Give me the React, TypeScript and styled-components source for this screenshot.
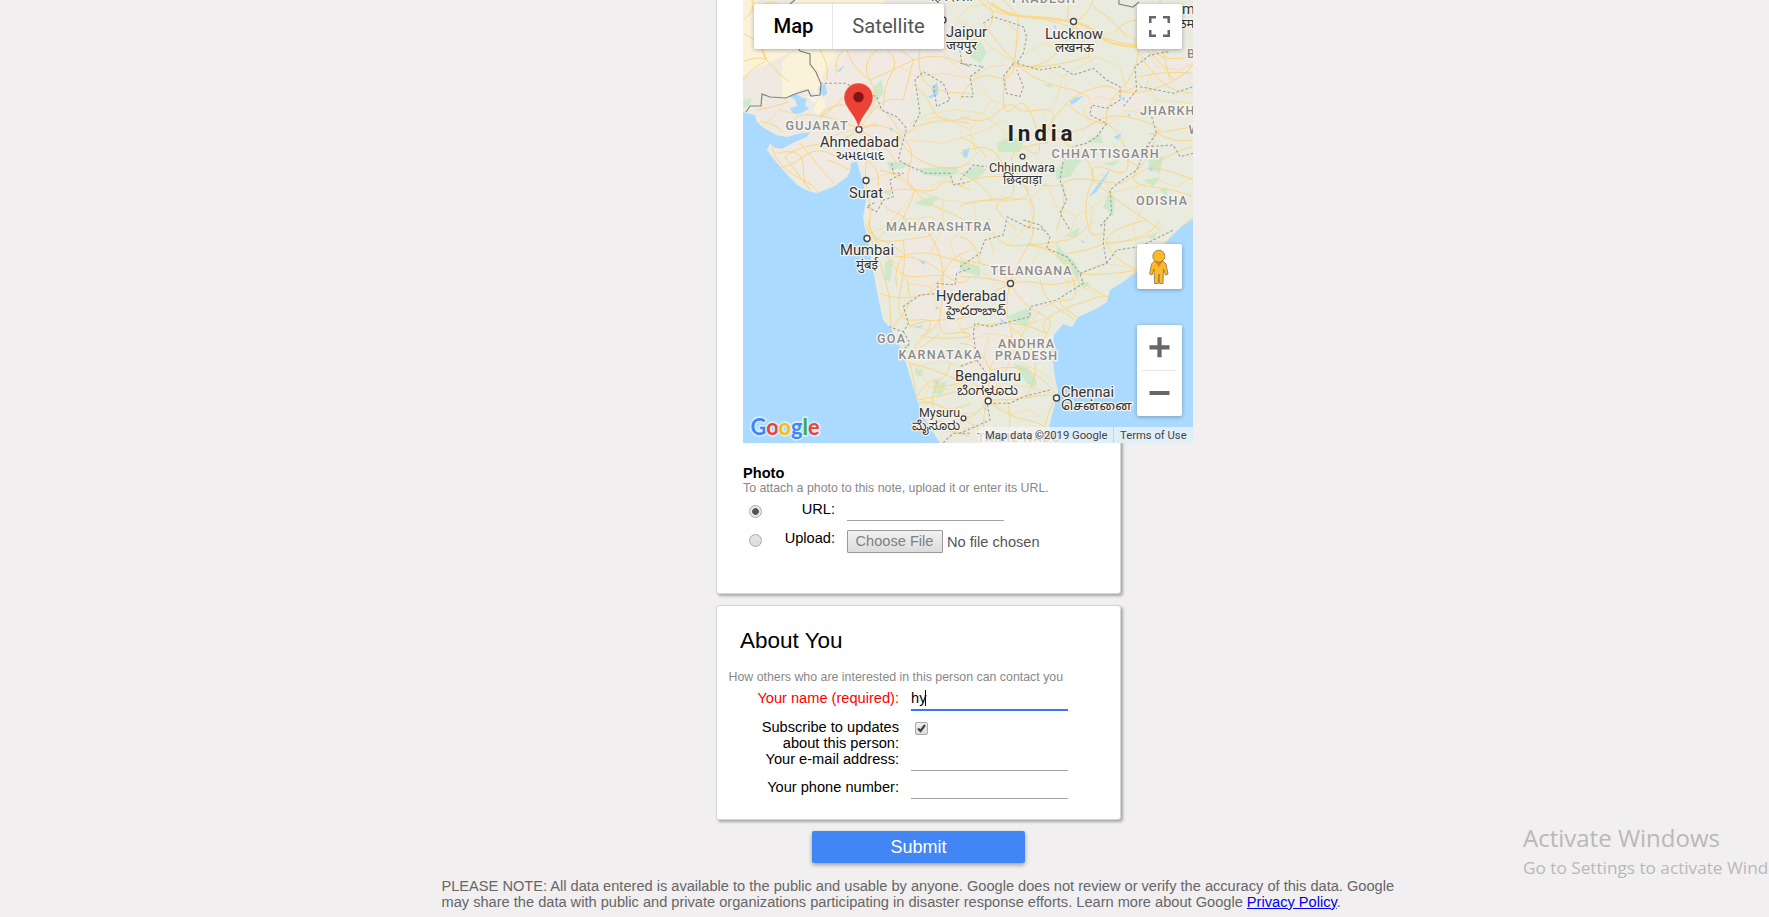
import React from "react";
import styled, { createGlobalStyle } from "styled-components";

const GlobalStyle = createGlobalStyle`
  * { box-sizing: border-box; }
  html, body { margin: 0; padding: 0; background: #f1eff0; overflow: hidden; }
  body { font: 14.625px/16px "Liberation Sans", Arial, sans-serif; color: #000; }
`;

const Page = styled.main`
  position: relative;
  width: 1769px;
  height: 917px;
  overflow: hidden;
`;

const Form = styled.form`
  width: 405px;
  margin-left: 716px;
  display: flex;
  flex-direction: column;
`;

const Card = styled.section<{ $height: number; $clipped?: boolean }>`
  width: 405px;
  height: ${(p) => p.$height}px;
  display: flex;
  flex-direction: column;
  background: #fff;
  border: 1px solid #d6d5d6;
  border-top-width: ${(p) => (p.$clipped ? 0 : 1)}px;
  border-radius: ${(p) => (p.$clipped ? "0 0 3px 3px" : "3px")};
  box-shadow: 2px 2px 3px rgba(0, 0, 0, 0.3);
  & + & { margin-top: 11px; }
`;

/* ---------- map ---------- */

const MapFrame = styled.div`
  position: relative;
  z-index: 1;
  flex: none;
  width: 450px;
  height: 443px;
  margin-left: 26px;
  background: #aadaff;
  font-family: Roboto, sans-serif;
`;

const MapCanvas = styled.svg`
  display: block;
  width: 450px;
  height: 443px;
`;

const Control = styled.div`
  position: absolute;
  background: #fff;
  border-radius: 2px;
  box-shadow: 0 1px 4px rgba(0, 0, 0, 0.3);
  display: flex;
  align-items: center;
  justify-content: center;
`;

const TypeSwitch = styled(Control)`
  left: 11px;
  top: 4px;
  width: 190px;
  height: 45px;
`;

const TypeButton = styled.button<{ $active?: boolean }>`
  width: ${(p) => (p.$active ? 78 : 112)}px;
  height: 45px;
  padding: ${(p) => (p.$active ? "0 0 2px 1px" : "0 0 2px")};
  border: 0;
  border-left: ${(p) => (p.$active ? "0" : "1px solid #e8e8e8")};
  background: transparent;
  font: ${(p) => (p.$active ? 500 : 400)} 20.25px Roboto, sans-serif;
  color: ${(p) => (p.$active ? "#000" : "#565656")};
`;

const SideControl = styled(Control)<{ $top: number; $tall?: boolean }>`
  right: 11px;
  top: ${(p) => p.$top}px;
  width: 45px;
  height: ${(p) => (p.$tall ? 91 : 45)}px;
`;

const Attribution = styled.div`
  position: absolute;
  right: 0;
  bottom: 0;
  height: 16px;
  display: flex;
  font-size: 11.25px;
  line-height: 17px;
  color: #444;
`;

const Credit = styled.span<{ $width: number }>`
  width: ${(p) => p.$width}px;
  padding-left: 6px;
  white-space: nowrap;
  background: rgba(245, 245, 245, 0.72);
  & + & { margin-left: 1px; }
`;

const land =
  "M743 0V112L755 115 757 122 764 128 777 135 787 137 797 134 810 132 807 137 793 143 782 149 775 148 770 144 767 150 777 163 787 174 797 185 808 191 817 193 833 187 847 177 850 171 851 163 857 161 860 173 864 187 866 200 863 217 864 225 868 240 873 270 878 297 883 320 892 330 898 343 905 360 912 383 918 403 924 416 930 428 940 443H1045L1049 427 1054 408 1058 391 1055 377 1052 353 1054 335 1063 324 1072 327 1078 317 1096 309 1107 302 1110 290 1123 282 1137 272 1150 259 1160 248 1173 235 1182 226 1193 219V0Z";

type Tile = { x: number; y: number; roads: string[]; borders: string[]; green: string[]; pale: string[]; water: string[] };

/* Each tile covers 260x230 px and is drawn at three units per pixel. */
const tiles: Tile[] = [
  {
    x: 710, y: 0,
    roads: [
      "M100 60Q140 30 125 0M165 10Q215 0 225 40M100 185Q160 160 180 190T238 245M170 178Q160 130 100 100",
      "M130 0Q160 60 155 110T170 180M100 240Q115 210 165 185M380 220Q370 180 400 150M350 240Q360 200 330 150",
      "M140 330Q200 320 235 305M150 365Q200 370 215 395M330 350Q370 330 400 290M445 385Q380 350 300 345T280 400",
      "M445 385Q420 420 340 430T225 470M300 570L225 470M200 460Q280 440 280 500T300 565M390 480Q330 430 280 470T200 500M270 430Q320 490 370 550M185 440Q200 500 260 530T320 575M350 480Q390 490 420 510",
      "M448 388Q470 350 500 320T580 300M610 180L580 300M610 180Q690 150 780 200M448 388Q480 430 470 480T475 590 470 690M470 480Q510 500 505 560T560 640 550 690M475 590Q550 560 615 570T690 555 780 570M615 570Q580 520 510 510M615 570Q640 610 700 630T780 680M615 570Q600 620 560 690",
      "M448 388Q510 360 565 400T600 500 615 570M480 340Q510 290 480 240T500 150M500 320Q540 340 560 380T620 380M520 320Q520 260 545 220T530 150M480 240Q430 210 410 150M480 240Q550 210 610 180M610 180Q590 160 570 150",
      "M448 388Q440 330 420 320T370 320 330 350M445 385Q470 380 500 370M450 390Q540 440 560 490M605 250Q650 280 670 330T780 350M620 380Q690 350 780 370M565 400Q580 460 650 490T780 490M630 150Q620 200 640 240T780 280",
    ],
    borders: [
      "M330 250H410L435 270 500 290 515 330 560 350 590 385 580 420 565 480 600 500 650 520 720 520 730 555 780 545",
      "M610 380L630 340 615 240 640 215 700 250 720 300 680 320 670 250M750 150L755 190 780 200M545 490L550 520 580 520 540 540 550 590 520 600 500 635 470 620 500 605",
    ],
    green: ["M490 260L515 240 520 280 495 310ZM625 505L740 500 745 520 700 530 640 525ZM530 485L600 490 580 505 540 510ZM100 300L125 295 120 315 100 325ZM520 575L545 570 540 590ZM610 610L660 590 690 590 660 620Z"],
    pale: ["M380 150L600 150 620 230 600 340 650 490 600 640 470 680 450 400 360 330 320 270ZM640 160L780 180V310L700 300 660 240Z", "M190 440L300 430 420 470 350 560 290 530Z"],
    water: ["M325 265L345 250 352 280 340 290ZM240 325L262 318 255 300 240 288 258 280 275 293 290 296 285 318 299 324 280 336 260 343 248 338ZM380 213L405 195 390 215ZM655 290L670 282 665 268 680 247 685 262 683 285 660 295ZM535 385L550 385 545 395ZM760 450L780 445 770 475ZM440 360L450 340 453 350 447 365Z"],
  },
  {
    x: 960, y: 0,
    roads: [
      "M60 0Q80 40 170 48T300 70 420 110 535 135 590 160 700 170M80 0Q120 60 70 100T0 130M130 0Q160 30 175 50M175 50Q170 120 165 185T100 230 0 300M400 0Q380 50 345 65T330 0M345 65Q330 120 290 160T200 200 165 185",
      "M390 170Q370 140 345 65M390 170Q290 200 210 200T165 185M165 185Q210 240 300 260T390 300M165 185Q120 140 70 70M165 185Q130 220 130 290T165 320 230 390 190 440",
      "M0 350Q70 380 110 340T165 320 240 330 270 380 260 430 200 440 180 530 150 600 170 690M0 460Q80 420 115 470T160 560 100 600 0 620M0 560Q70 510 180 540T310 550 400 540 480 550 570 500 700 440",
      "M265 380Q290 340 320 310T400 265 470 270 540 250M265 390Q350 410 400 370T540 360 580 400 700 380M435 370Q370 360 320 310M440 370Q430 320 480 270T535 160 520 130M430 370Q480 380 500 460T450 510 400 540",
      "M530 150Q560 200 600 240T700 280M560 150Q620 200 640 240M540 230Q620 210 700 220M480 270Q520 290 600 260T700 190M580 400Q590 450 540 500T570 560 700 590M400 540Q370 590 380 660T440 690M400 540Q440 580 500 620T600 690M310 550Q320 610 290 690M180 540Q210 580 220 620T200 690",
      "M100 600Q60 540 0 520M400 540Q400 490 360 460T270 400M470 90Q500 60 530 60M400 20Q460 60 500 110M570 500Q630 510 700 540M600 0Q600 140 630 240M590 400Q640 430 700 420M0 410Q50 430 80 470M540 500Q480 480 460 430",
    ],
    borders: [
      "M70 70L100 50 190 80 200 110 190 160 170 190 240 210 300 200 340 225 400 205 440 240 480 260 480 300 440 325 395 315 390 345 440 370 410 410 380 430 340 440 310 480 300 540 320 600 300 640 330 690",
      "M160 190L130 230 140 280 180 290 190 260 170 210M0 190L70 200 30 230 40 290 0 290M625 155L570 165 525 200 530 270 490 320M540 260L640 280 700 260M575 350L590 400 560 440 530 510 480 545 450 570 455 640 420 680M560 440L640 435 660 470 700 460M140 650L200 680 250 690M0 540L40 495 80 500",
    ],
    green: ["M30 170L60 120 80 160 60 190ZM110 430L150 410 195 420 180 455 115 455ZM250 255L275 250 275 265ZM0 520L60 495 80 510 40 540ZM285 510L350 450 370 470 330 530 290 540ZM380 425L420 400 430 430ZM560 460L610 470 600 520 570 510ZM450 570L465 600 460 650 430 620ZM550 540L600 530 580 560ZM600 570L620 560 625 600ZM430 490L480 480 460 500Z"],
    pale: ["M360 270L480 250 540 270 580 310 500 340 430 320 400 370ZM120 180L200 200 190 300 140 290Z", "M550 180L700 160V250L600 260Z"],
    water: ["M330 305L345 293 370 288 350 305 335 315ZM480 295L495 290 495 303ZM8 450L25 450 20 460 15 475 10 470ZM460 410L485 400 475 420ZM385 593L415 550 450 508 440 530 410 575ZM500 345L510 340 510 350ZM562 505L580 500 575 515ZM280 75L290 80 285 90Z"],
  },
  {
    x: 710, y: 220,
    roads: [
      "M465 15Q490 40 500 55T580 60 650 50 700 20 780 40M475 40Q500 90 520 160T540 260 545 330 600 400M470 30Q500 50 510 80T580 110 700 160 780 170M500 70Q480 30 475 0",
      "M505 55Q540 20 550 0M590 105Q640 90 700 110T780 130M580 60Q590 130 570 220T620 300 640 350 600 400M700 160Q690 220 620 230T510 220M700 160Q720 110 780 90M700 160Q690 60 620 0M700 160Q700 230 690 290T730 340 780 350",
      "M530 110Q570 170 600 170T700 165M550 320Q600 260 600 240T590 180M595 320Q640 300 690 300T780 290M640 350Q700 360 780 350M600 430Q680 450 720 470T780 460M590 410Q610 450 620 540T680 630 780 650M620 550Q660 540 690 560T780 550M620 530Q650 480 680 480T720 430M620 540Q700 530 780 500M650 600Q700 590 740 640M630 350Q680 330 690 290M600 400Q640 380 690 340",
      "M580 110Q550 140 560 200M520 60Q570 90 590 110M670 560Q660 510 690 480M680 500Q740 500 780 470",
    ],
    borders: ["M780 145L740 160 735 195 680 190 690 220 630 225 580 260 595 310 580 335 535 320", "M580 335L600 370 580 390M780 640L730 640 700 668"],
    green: ["M525 125L550 120 540 185 525 180ZM670 490L710 485 695 525 670 520ZM615 445L640 450 635 470 618 465ZM575 370L600 375 590 390Z"],
    pale: ["M520 60L690 30 780 60V330L650 310 600 290 620 200 560 150Z"],
    water: ["M625 120L648 125 640 135ZM610 320L640 316 630 325ZM675 260L688 262 680 270ZM670 480L685 485 680 492Z"],
  },
  {
    x: 960, y: 220,
    roads: [
      "M150 190Q170 130 205 75T190 0M150 190Q100 220 60 230T0 260M150 190Q190 260 240 280T260 340 280 420 290 530M150 190Q200 180 240 190T350 180M150 190Q120 140 60 130T0 110M150 190Q80 170 0 170M150 190Q130 270 150 320T130 400 90 450 80 540",
      "M200 75Q280 70 320 60T400 0M200 75Q290 80 330 160T320 240 350 290M700 -10Q620 60 530 150T440 230 330 260 260 340M530 150Q450 110 440 70T560 0M330 160Q430 170 530 150M240 180Q250 240 300 270T340 300",
      "M260 340Q200 310 140 310T0 330M80 540Q170 540 220 530T290 530M80 540Q140 590 200 600T260 640M80 540Q60 590 0 600M80 540Q50 480 0 470M90 450Q170 430 220 460T290 530M290 530Q260 580 250 640T240 670M80 540Q130 480 160 400T230 300M200 75Q130 90 100 40T90 0",
      "M80 540Q60 640 80 670M140 540Q160 590 140 670M0 370Q60 370 90 450M150 320Q200 350 220 400T200 530M0 50Q50 60 60 130M360 180Q400 210 440 230M430 70Q400 90 320 100M600 0Q570 60 440 70M10 595Q50 630 120 640T240 620",
    ],
    borders: [
      "M0 140L60 100 75 60 130 45 140 0M190 0L240 15 270 50 260 85 320 110 360 160 370 190 290 240 210 260 210 290 130 310 90 320 45 310 40 340 50 420 0 440",
      "M360 160L440 130 470 90 540 80 640 30M440 130L430 70 435 0M270 510L190 530 150 550 80 550M80 540L90 600 0 640M50 420L80 460 50 480",
    ],
    green: ["M140 290L200 265 215 285 200 320 165 305ZM160 430L200 440 230 480 225 505 200 490ZM290 70L310 95 350 130 360 190 330 150 290 110ZM350 190L390 185 375 205ZM0 120L60 140 60 170 0 150ZM560 50L590 40 580 60ZM310 50L360 20 350 50Z"],
    pale: ["M40 320L150 300 190 350 160 450 90 500 0 430ZM80 100L200 100 190 180 220 250 130 260Z"],
    water: ["M120 295L135 305 125 310ZM360 60L375 65 370 70ZM205 65L215 70 205 75ZM70 560L80 565 75 572Z"],
  },
];

/* Minor road network, in thirds of a pixel from the map's top-left corner. */
const minorRoads = [
  "M603 160L640 200 700 250 745 300 800 320M470 200L520 230 600 220 680 235 745 200 790 195M745 300L720 340 640 330 560 340 500 370",
  "M540 360L600 350 680 390 720 340M680 390L700 460 640 520 560 560M720 340L790 400 760 480 700 540M500 420L600 430 700 400 790 360",
  "M380 540L440 520 520 570 600 600 690 610 700 660 640 680 560 650 480 660 380 700M520 570L480 620 430 680M600 600L600 680 560 760M690 610L780 590 860 600 910 550",
  "M860 600L870 660 830 700 790 740M910 550L940 620 1000 650 1050 620 1100 580 1180 560M1050 620L1040 700 1090 730 1180 720 1260 690M1000 650L980 700 930 740 850 735",
  "M1180 560L1200 620 1170 680 1180 720M1100 580L1080 520 1050 540M1180 560L1240 540 1300 560 1350 530M850 210L900 200 960 230 1010 200 1060 170 1130 200M960 230L940 300 900 350",
  "M1130 200L1150 260 1120 300 1060 290M1060 290L1020 330 1040 370 1100 370M1100 370L1150 330 1200 340 1240 300 1350 310M1240 300L1210 250 1240 200 1220 160M1240 200L1310 210 1350 190",
  "M850 160L900 130 960 150 1040 150M1040 150L1070 110 1130 90 1180 120M640 60L700 90 740 140 810 185M640 60L680 20 740 10M780 60L830 100 810 185",
  "M400 740L460 790 500 850 560 860 603 830M500 850L480 920 500 980 560 990M560 860L590 930 640 960 700 930M640 960L680 1020 740 1000 800 1010 860 970 930 950",
  "M800 1010L820 1080 880 1110 930 1140M740 1000L720 1080 650 1100 600 1080 520 1100M520 1100L560 1160 620 1170 680 1140M560 1160L540 1200 580 1260 640 1290 700 1280M735 1200L800 1240 860 1230 900 1260",
  "M735 1200L780 1150 850 1160 930 1180M735 1200L700 1240 640 1240 580 1210M640 780L700 800 760 850 803 850M640 780L620 720 660 690 740 700 750 760M803 850L860 800 900 740",
  "M860 800L930 810 980 850 1040 870 1090 900M980 850L960 900 900 920 860 970M900 740L960 770 1000 830M1000 830L1080 790 1150 800M60 380L110 330 150 340M240 420L290 400 350 385",
];

type Label = [text: string, x: number, y: number, width: number, size: number];

const cities: Label[] = [
  ["Jaipur", 946, 37, 41, 14.6],
  ["जयपुर", 946, 50, 31, 13],
  ["Lucknow", 1045, 38.5, 58, 14.6],
  ["लखनऊ", 1055, 52, 39, 13],
  ["Ahmedabad", 820, 147, 79, 14.6],
  ["અમદાવાદ", 836, 160, 48, 13],
  ["Surat", 849, 198, 34, 14.6],
  ["Chhindwara", 989, 171.5, 66, 12.8],
  ["छिंदवाड़ा", 1003, 184, 39, 12.5],
  ["Mumbai", 840, 255, 54, 14.6],
  ["मुंबई", 856, 269, 22, 13],
  ["Hyderabad", 936, 301, 70, 14.6],
  ["హైదరాబాద్", 946, 315, 60, 13],
  ["Bengaluru", 955, 381, 66, 14.6],
  ["ಬೆಂಗಳೂರು", 957, 395, 61, 13],
  ["Mysuru", 919, 417, 41, 12.8],
  ["ಮೈಸೂರು", 912, 430, 48, 13],
  ["Chennai", 1061, 396.5, 53, 14.6],
  ["சென்னை", 1061, 410, 71, 13],
];

const states: Label[] = [
  ["GUJARAT", 785.5, 130, 62, 12.5],
  ["MAHARASHTRA", 886, 230.5, 105, 12.5],
  ["CHHATTISGARH", 1051.5, 157.5, 107, 12.5],
  ["ODISHA", 1136, 204.5, 51, 12.5],
  ["TELANGANA", 990.5, 275, 81, 12.5],
  ["GOA", 877, 343, 28, 12.5],
  ["KARNATAKA", 898.5, 359, 83, 12.5],
  ["ANDHRA", 998, 347.5, 56, 12.5],
  ["PRADESH", 995, 360, 62, 12.5],
  ["PRADESH", 1012, 2.5, 63, 12.5],
  ["TAMIL NADU", 977, 441.5, 83, 12.5],
];

const clippedStates: [string, number, number][] = [
  ["JHARKHAND", 1140, 114.5],
  ["BIHAR", 1187, 58],
  ["WEST", 1188.5, 134],
];

const dots: [number, number, number][] = [
  [859, 129.5, 3], [866, 180.5, 3], [867, 238.5, 3], [1073.5, 21.5, 3], [1022.5, 156.5, 2.4],
  [1010.5, 283.5, 3], [988.2, 401, 3], [1056.5, 398, 3], [963.5, 418.3, 2.4], [943, 20, 3],
];

const StateText = styled.text`
  font: 500 12.5px Roboto, sans-serif;
  fill: #8b8b8b;
  stroke: #f5f3ee;
  stroke-width: 3px;
  stroke-linejoin: round;
  paint-order: stroke;
`;

const CityText = styled.text`
  font-family: Roboto, "Noto Sans", "Noto Sans Devanagari", "Noto Sans Gujarati", "Noto Sans Kannada", "Noto Sans Telugu", "Noto Sans Tamil", sans-serif;
  fill: #333;
  stroke: #f7f5ef;
  stroke-width: 2.4px;
  stroke-linejoin: round;
  paint-order: stroke;
`;

const CountryText = styled(CityText)`
  font-weight: 700;
  font-size: 22.5px;
  fill: #222;
`;

const LogoText = styled.text`
  font: 700 23px Lato, sans-serif;
  stroke: #d8ecfc;
  stroke-width: 3.4px;
  stroke-linejoin: round;
  paint-order: stroke;
`;

function Terrain() {
  return (
    <>
      <defs>
        <clipPath id="land"><path d={land} /></clipPath>
      </defs>
      <path d={land} fill="#e9ebdf" />
      <g clipPath="url(#land)">
        <path d="M743 0H950V50L890 110 850 180 815 193 743 150Z" fill="#eee9e1" />
        <path d="M743 0H756L765 18 795 0H885L860 40 842 62 835 70 828 66 822 78 828 92 826 106 818 116 813 110 820 96 811 90 801 89 788 97 782 96 782 62 790 55 795 50 743 76Z" fill="#faf3d9" />
        <path d="M806 96L820 95 814 103Z" fill="#f5f3ef" />
        {tiles.map((t) => (
          <g key={`${t.x}-${t.y}`} transform={`translate(${t.x} ${t.y}) scale(.33333)`}>
            {t.pale.map((d) => <path key={d} d={d} fill="#f0e9e2" opacity=".75" />)}
            {t.green.map((d) => <path key={d} d={d} fill="#cde8cb" />)}
            {t.water.map((d) => <path key={d} d={d} fill="#aadaff" />)}
          </g>
        ))}
        <g transform="translate(743 0) scale(.33333)" fill="none" stroke="#f8dd9c" strokeWidth="2.6" strokeLinejoin="round">
          {minorRoads.map((d) => <path key={d} d={d} />)}
        </g>
        {tiles.map((t) => (
          <g key={`${t.x}-${t.y}`} transform={`translate(${t.x} ${t.y}) scale(.33333)`} fill="none">
            {t.roads.map((d) => <path key={d} d={d} stroke="#f9d684" strokeWidth="3" />)}
            {t.borders.map((d) => (
              <path key={d} d={d} stroke="#9f9f9b" strokeWidth="3.2" strokeDasharray="8 6" strokeLinejoin="round" />
            ))}
          </g>
        ))}
        <path d="M991 3Q1005 16 1030 17T1073 22 1100 36 1140 47" fill="none" stroke="#fbd98a" strokeWidth="2.4" />
        <path d="M746 112L750 106 761 106 762 94 770 97 786 98 795 94 808 90 811 96 820 95 821 84 816 72 810 64 810 54 800 51 797 46M790 4L795 0M1119 0V4L1133 7 1139 2" fill="none" stroke="#85857f" strokeWidth="1.2" />
      </g>
    </>
  );
}

function IndiaMap() {
  return (
    <MapCanvas viewBox="743 0 450 443">
      <Terrain />
      {dots.map(([x, y, r]) => (
        <circle key={`${x}-${y}`} cx={x} cy={y} r={r} fill="#fff" stroke="#454545" strokeWidth="1.4" />
      ))}
      {states.map(([t, x, y, w]) => (
        <StateText key={`${t}-${x}`} x={x} y={y} textLength={w}>{t}</StateText>
      ))}
      {clippedStates.map(([t, x, y]) => (
        <StateText key={t} x={x} y={y} letterSpacing="1.1">{t}</StateText>
      ))}
      {cities.map(([t, x, y, w, s]) => (
        <CityText key={t} x={x} y={y} fontSize={s} textLength={w} lengthAdjust="spacingAndGlyphs">{t}</CityText>
      ))}
      <CityText x="931" y="1" fontSize="13">हि दिल्ली</CityText>
      <CityText x="1182" y="14" fontSize="14.6">ma</CityText>
      <CityText x="1179" y="28" fontSize="13">ठमा</CityText>
      <CountryText x="1007.5" y="141" textLength="65">India</CountryText>
      <path d="M858.5 129C857 116 844 108 844 97.500A14.500 14.500 0 0 1 873 97.500C873 108 860 116 858.500 129Z" fill="#ea4335" stroke="#fff" strokeOpacity=".45" strokeWidth=".8" />
      <circle cx="858.5" cy="97" r="5.2" fill="#811411" />
      <LogoText x="750.5" y="434.5" textLength="69" lengthAdjust="spacingAndGlyphs">
        <tspan fill="#4285f4">G</tspan><tspan fill="#ea4335">o</tspan><tspan fill="#fbbc05">o</tspan><tspan fill="#4285f4">g</tspan><tspan fill="#34a853">l</tspan><tspan fill="#ea4335">e</tspan>
      </LogoText>
    </MapCanvas>
  );
}

function MapPanel() {
  return (
    <MapFrame>
      <IndiaMap />
      <TypeSwitch>
        <TypeButton type="button" $active>Map</TypeButton>
        <TypeButton type="button">Satellite</TypeButton>
      </TypeSwitch>
      <SideControl $top={4}>
        <svg width="21" height="21" viewBox="0 0 21 21" fill="none" stroke="#666" strokeWidth="2.5">
          <path d="M1.250 7V1.250H7M14 1.250H19.750V7M19.750 14V19.750H14M7 19.750H1.250V14" />
        </svg>
      </SideControl>
      <SideControl $top={244}>
        <svg width="22" height="36" viewBox="0 0 22 36" fill="#fbb928" stroke="#8b7442" strokeWidth=".8">
          <path d="M5 12.500H14.500L17 15 19 25 16.500 26 14.500 20 14 34.500H10.600L10 25 9.200 34.500H5.500L5 20 3 26 .600 25 2.500 15Z" />
          <path d="M6 12.500H13.500L9.800 18Z" fill="#e0812c" stroke="none" />
          <circle cx="9.800" cy="7.200" r="6" />
        </svg>
      </SideControl>
      <SideControl $top={325} $tall>
        <svg width="45" height="91" viewBox="0 0 45 91">
          <path d="M12.500 22.300H32.500M22.500 12.300V32.300M12.500 68H32.500" stroke="#666" strokeWidth="4.200" />
          <path d="M5 45.500H39" stroke="#e6e6e6" />
        </svg>
      </SideControl>
      <Attribution>
        <Credit $width={134}>Map data ©2019 Google</Credit>
        <Credit $width={79}>Terms of Use</Credit>
      </Attribution>
    </MapFrame>
  );
}

/* ---------- form parts ---------- */

const PhotoTitle = styled.h3`
  margin: 22px 0 0 26px;
  font-size: 14.6px;
  line-height: 16px;
  font-weight: 700;
`;

const Hint = styled.p<{ $indent: number }>`
  margin: 0 0 5px ${(p) => p.$indent}px;
  font-size: 12.375px;
  line-height: 15px;
  color: #888;
  white-space: nowrap;
`;

const PhotoRow = styled.div`
  display: grid;
  grid-template-columns: 32px 61px 1fr;
  column-gap: 12px;
  margin-left: 13px;
  height: 29px;
  align-items: start;
`;

const Radio = styled.span<{ $on?: boolean }>`
  justify-self: end;
  width: 13px;
  height: 13px;
  margin-top: 4px;
  border: 1px solid #a9a9a9;
  border-radius: 50%;
  background: ${(p) =>
    p.$on ? "radial-gradient(circle, #555 0 3px, #e9e9e9 3.7px)" : "linear-gradient(#e4e4e4, #dcdcdc)"};
`;

const FieldLabel = styled.label<{ $required?: boolean }>`
  text-align: right;
  white-space: nowrap;
  color: ${(p) => (p.$required ? "#f00" : "#000")};
`;

const TextLine = styled.div<{ $focused?: boolean }>`
  width: 157px;
  height: ${(p) => (p.$focused ? 21 : 20)}px;
  line-height: 17px;
  border-bottom: ${(p) => (p.$focused ? "2px solid #3b78e7" : "1px solid #a3a3a3")};
`;

const Caret = styled.span`
  display: inline-block;
  width: 1px;
  height: 16px;
  margin-left: -1px;
  background: #000;
  vertical-align: -3px;
`;

const FilePicker = styled.div`
  display: flex;
  align-items: center;
  gap: 4px;
  color: #555;
  white-space: nowrap;
`;

const FileButton = styled.button`
  width: 96px;
  height: 23px;
  padding: 0 1px 1px 0;
  border: 1px solid #999;
  border-radius: 1px;
  background: linear-gradient(#f1f1f1, #dcdcdc);
  font: 14.6px "Liberation Sans", Arial, sans-serif;
  color: #808080;
`;

const CardTitle = styled.h2`
  margin: 21px 0 15px 23px;
  font-size: 22.5px;
  line-height: 28px;
  font-weight: 400;
`;

const ContactRow = styled.div<{ $height: number }>`
  display: grid;
  grid-template-columns: 182px 1fr;
  column-gap: 12px;
  height: ${(p) => p.$height}px;
  align-items: start;
`;

const CheckBox = styled.span`
  display: flex;
  width: 13px;
  height: 13px;
  margin: 3px 0 0 4px;
  border: 1px solid #a9a9a9;
  border-radius: 2px;
  background: linear-gradient(#eee, #ddd);
`;

const Submit = styled.button`
  width: 213px;
  height: 32px;
  margin: 11px 0 0 96px;
  padding: 0;
  border: 0;
  border-radius: 2px;
  background: #4285f4;
  color: #fff;
  font: 18px "Liberation Sans", Arial, sans-serif;
  box-shadow: 0 2px 4px rgba(0, 0, 0, 0.35);
`;

const Notice = styled.p`
  width: 970px;
  margin: 15px 0 0 441.5px;
  color: #666;
  white-space: nowrap;
  a { color: #00e; }
`;

const Watermark = styled.aside`
  position: absolute;
  left: 1523px;
  top: 822px;
  font-family: "Open Sans", "Noto Sans", sans-serif;
  color: #b9b8b9;
  white-space: nowrap;
`;

const WatermarkTitle = styled.div`
  font-size: 24px;
  line-height: 32px;
`;

const WatermarkText = styled.div`
  font-size: 17.2px;
  line-height: 27px;
`;

export default function App() {
  return (
    <Page>
      <GlobalStyle />
      <Form>
        <Card $height={594} $clipped>
          <MapPanel />
          <PhotoTitle>Photo</PhotoTitle>
          <Hint $indent={26}>To attach a photo to this note, upload it or enter its URL.</Hint>
          <PhotoRow>
            <Radio $on />
            <FieldLabel>URL:</FieldLabel>
            <TextLine />
          </PhotoRow>
          <PhotoRow>
            <Radio />
            <FieldLabel>Upload:</FieldLabel>
            <FilePicker>
              <FileButton type="button">Choose File</FileButton>
              <span>No file chosen</span>
            </FilePicker>
          </PhotoRow>
        </Card>
        <Card $height={215}>
          <CardTitle>About You</CardTitle>
          <Hint $indent={11.5}>How others who are interested in this person can contact you</Hint>
          <ContactRow $height={29}>
            <FieldLabel $required>Your name (required):</FieldLabel>
            <TextLine $focused>hy<Caret /></TextLine>
          </ContactRow>
          <ContactRow $height={32}>
            <FieldLabel>Subscribe to updates<br />about this person:</FieldLabel>
            <CheckBox>
              <svg width="11" height="11" viewBox="0 0 11 11"><path d="M2 5.500L4.500 8 9 2" fill="none" stroke="#444" strokeWidth="2.200" /></svg>
            </CheckBox>
          </ContactRow>
          <ContactRow $height={28}>
            <FieldLabel>Your e-mail address:</FieldLabel>
            <TextLine />
          </ContactRow>
          <ContactRow $height={28}>
            <FieldLabel>Your phone number:</FieldLabel>
            <TextLine />
          </ContactRow>
        </Card>
        <Submit type="button">Submit</Submit>
      </Form>
      <Notice>
        PLEASE NOTE: All data entered is available to the public and usable by anyone. Google does not review or verify the accuracy of this data. Google<br />
        may share the data with public and private organizations participating in disaster response efforts. Learn more about Google <a href="#">Privacy Policy</a>.
      </Notice>
      <Watermark>
        <WatermarkTitle>Activate Windows</WatermarkTitle>
        <WatermarkText>Go to Settings to activate Windows.</WatermarkText>
      </Watermark>
    </Page>
  );
}
